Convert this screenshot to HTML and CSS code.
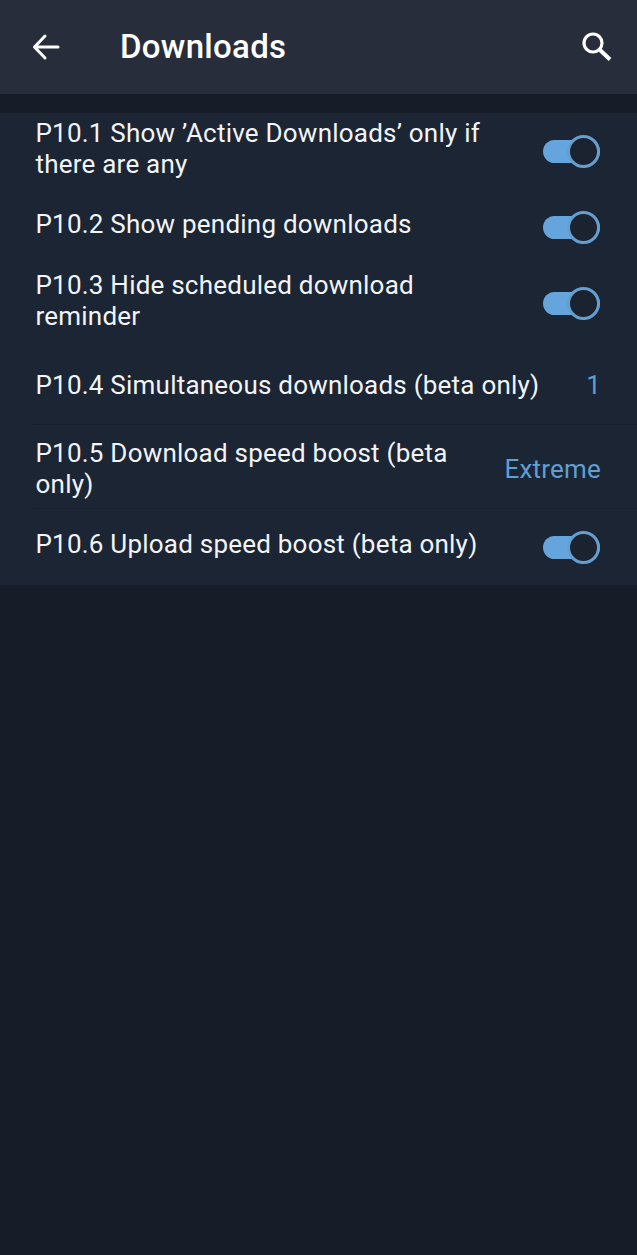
FILE: index.html
```html
<!DOCTYPE html>
<html lang="en">
<head>
<meta charset="utf-8">
<title>Downloads</title>
<link rel="stylesheet" href="styles.css">
</head>
<body>
<header class="appbar">
  <svg class="icon-back" width="30" height="30" viewBox="0 0 30 30" fill="none" stroke="#fff" stroke-width="3" stroke-linecap="round" stroke-linejoin="round"><path d="M3.500 15H27M14 4 3.500 15 14 26"/></svg>
  <h1 class="title">Downloads</h1>
  <svg class="icon-search" width="32" height="32" viewBox="0 0 32 32" fill="none" stroke="#fff"><circle cx="12" cy="12" r="9" stroke-width="3.200"/><path d="M18.500 18.500 29 28.500" stroke-width="4"/></svg>
</header>
<main class="card">
  <div class="row row-toggle"><div class="label label-wrap">P10.1 Show ’Active Downloads’ only if there are any</div><span class="switch"><span class="knob"></span></span></div>
  <div class="row row-toggle"><div class="label">P10.2 Show pending downloads</div><span class="switch"><span class="knob"></span></span></div>
  <div class="row row-toggle"><div class="label label-wrap">P10.3 Hide scheduled download reminder</div><span class="switch"><span class="knob"></span></span></div>
  <div class="row row-value"><div class="label label-single">P10.4 Simultaneous downloads (beta only)</div><span class="value">1</span></div>
  <div class="row row-value"><div class="label">P10.5 Download speed boost (beta only)</div><span class="value">Extreme</span></div>
  <div class="row row-toggle"><div class="label">P10.6 Upload speed boost (beta only)</div><span class="switch"><span class="knob"></span></span></div>
</main>
</body>
</html>
```
FILE: styles.css
```css
* { box-sizing: border-box; }
html, body { margin: 0; height: 100%; }
body {
  background: #161d28;
  font-family: Roboto, "Liberation Sans", sans-serif;
  color: #f2f4f6;
  overflow: hidden;
}
.appbar {
  height: 94px;
  background: #272d3b;
  display: flex;
  align-items: center;
  padding: 0 24px 0 31px;
}
.icon-back { flex: none; }
.title {
  margin: 0 0 0 59px;
  flex: 1;
  font-size: 33px;
  line-height: 36px;
  font-weight: 500;
  letter-spacing: 0.3px;
  color: #fff;
}
.icon-search { flex: none; }
.card {
  margin-top: 19px;
  background: #1c2533;
  padding-left: 35.5px;
}
.row {
  display: flex;
  align-items: center;
  justify-content: space-between;
  gap: 4px;
  padding-right: 36px;
}
.row-toggle { height: 76px; }
.row-toggle .label { padding-bottom: 6px; }
.row-toggle .label-wrap { padding-bottom: 4px; }
.row-value {
  height: 84px;
  margin-left: -2.5px;
  padding-left: 2.5px;
  border-bottom: 1px solid #171e2a;
}
.row-value .label, .row-value .value { padding-top: 5px; }
.label {
  font-size: 26px;
  line-height: 31px;
  letter-spacing: 0.22px;
  max-width: 470px;
}
.label-single { max-width: none; white-space: nowrap; }
.value {
  font-size: 26px;
  line-height: 31px;
  letter-spacing: 0.2px;
  color: #5f9fd4;
  white-space: nowrap;
}
.switch {
  flex: none;
  position: relative;
  width: 57px;
  height: 23px;
  margin-right: 1px;
  background: #64a5dd;
  border-radius: 12px;
  margin-top: 1px;
}
.knob {
  position: absolute;
  right: 0;
  top: -5px;
  width: 33px;
  height: 33px;
  border-radius: 50%;
  background: #1b2331;
  border: 3.5px solid #659fce;
}
```
